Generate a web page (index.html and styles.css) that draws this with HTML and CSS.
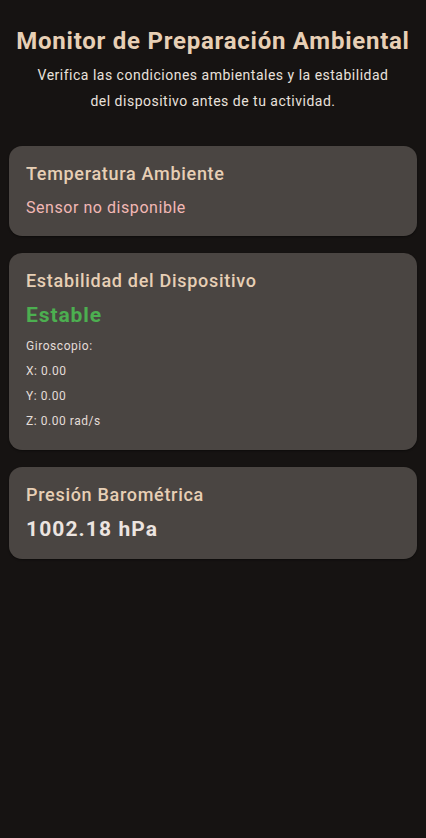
FILE: index.html
```html
<!DOCTYPE html>
<html lang="es">
<head>
<meta charset="utf-8">
<link rel="stylesheet" href="styles.css">
</head>
<body>
<main class="screen">
  <header class="header">
    <h1 class="title">Monitor de Preparación Ambiental</h1>
    <p class="subtitle">Verifica las condiciones ambientales y la estabilidad del dispositivo antes de tu actividad.</p>
  </header>
  <section class="card">
    <h2 class="card-title">Temperatura Ambiente</h2>
    <p class="error">Sensor no disponible</p>
  </section>
  <section class="card">
    <h2 class="card-title">Estabilidad del Dispositivo</h2>
    <p class="status">Estable</p>
    <p class="detail">Giroscopio:</p>
    <p class="detail">X: 0.00</p>
    <p class="detail">Y: 0.00</p>
    <p class="detail">Z: 0.00 rad/s</p>
  </section>
  <section class="card">
    <h2 class="card-title">Presión Barométrica</h2>
    <p class="value">1002.18 hPa</p>
  </section>
</main>
</body>
</html>
```
FILE: styles.css
```css
html, body {
  margin: 0;
  padding: 0;
  background: #161312;
}
body {
  font-family: Roboto, "Noto Sans", sans-serif;
  width: 426px;
  height: 838px;
  overflow: hidden;
}
.screen {
  display: flex;
  flex-direction: column;
  gap: 17px;
  padding: 26px 9px 0;
}
.header {
  text-align: center;
  margin-bottom: 15px;
}
.title {
  margin: 0;
  font-size: 24px;
  font-weight: 700;
  color: #e7cfb5;
  line-height: 30px;
  letter-spacing: 0.75px;
  white-space: nowrap;
}
.subtitle {
  margin: 6px auto 0;
  max-width: 364px;
  font-size: 14px;
  line-height: 26px;
  color: #e9e1dc;
  letter-spacing: 0.5px;
}
.card {
  background: #4a4542;
  border-radius: 13px;
  padding: 16px 16px 16px 17px;
  box-shadow: 0 1px 2px rgba(0,0,0,0.4);
}
.card p, .card h2 { margin: 0; }
.card-title {
  font-size: 18px;
  font-weight: 500;
  color: #e7cfb5;
  line-height: 24px;
  letter-spacing: 0.7px;
}
.error {
  margin-top: 10px !important;
  font-size: 16px;
  line-height: 24px;
  color: #f2b8b5;
  letter-spacing: 0.55px;
}
.status {
  margin-top: 7px !important;
  font-size: 21px;
  font-weight: 700;
  line-height: 30px;
  color: #4caf50;
  letter-spacing: 0.9px;
}
.detail {
  font-size: 12px;
  line-height: 25px;
  color: #e3dcd8;
  letter-spacing: 0.55px;
}
.status + .detail { margin-top: 4px !important; }
.value {
  margin-top: 8px !important;
  font-size: 21px;
  font-weight: 700;
  line-height: 28px;
  color: #ece4e0;
  letter-spacing: 1.1px;
}
```
